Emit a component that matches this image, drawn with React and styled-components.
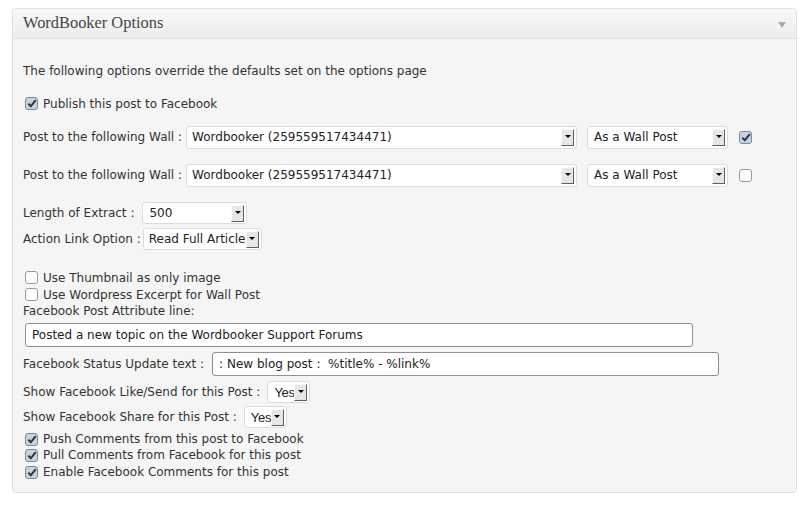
import React from 'react';
import styled, { createGlobalStyle } from 'styled-components';

const Global = createGlobalStyle`
  html, body { margin: 0; padding: 0; background: #fff; }
  body {
    font-family: "DejaVu Sans", Verdana, sans-serif;
    font-size: 12px;
    color: #333;
  }
`;

const Panel = styled.div`
  margin: 8px 0 0 12px;
  width: 785px;
  box-sizing: border-box;
  border: 1px solid #dfdfdf;
  border-radius: 4px;
  background: #f5f5f5;
`;

const Header = styled.div`
  height: 29px;
  border-bottom: 1px solid #dfdfdf;
  background: linear-gradient(#f9f9f9, #ececec);
  border-radius: 3px 3px 0 0;
  display: flex;
  align-items: center;
  justify-content: space-between;
  padding: 0 10px;
`;

const Title = styled.h3`
  margin: 0 0 1px 0;
  font-family: "Liberation Serif", "Times New Roman", serif;
  font-weight: normal;
  font-size: 16.4px;
  color: #464646;
`;

const Toggle = styled.span`
  width: 0;
  height: 0;
  border-left: 4px solid transparent;
  border-right: 4px solid transparent;
  border-top: 6px solid #aaa;
  margin-top: 2px;
`;

const Body = styled.div`
  padding: 24px 10px 12px 10px;
  display: flex;
  flex-direction: column;
`;

const Line = styled.div`
  height: ${p => p.$h || 17}px;
  line-height: ${p => p.$h || 17}px;
  margin-top: ${p => p.$mt || 0}px;
  white-space: nowrap;
`;

const CheckLine = styled.label`
  display: flex;
  align-items: center;
  height: ${p => p.$h || 17}px;
  margin-top: ${p => p.$mt || 0}px;
  padding-left: 2px;
  gap: 5px;
  white-space: nowrap;
`;

const Box = styled.span`
  width: 13px;
  height: 13px;
  flex: none;
  box-sizing: border-box;
  border: 1px solid ${p => (p.$checked ? '#7d8999' : '#9a9a9a')};
  border-radius: 3px;
  background: ${p => (p.$checked ? '#c8d2df' : '#fff')};
  display: inline-flex;
  align-items: center;
  justify-content: center;
  margin-left: ${p => p.$ml || 0}px;
`;

const Row = styled.div`
  display: flex;
  align-items: center;
  height: 24px;
  margin-top: ${p => p.$mt || 0}px;
  white-space: nowrap;
`;

const Select = styled.div`
  width: ${p => p.$w}px;
  height: ${p => p.$h || 22}px;
  box-sizing: border-box;
  background: #fff;
  border: 1px solid #dcdcdc;
  border-radius: 3px;
  display: flex;
  align-items: center;
  padding: 0 2px 0 ${p => p.$pl ?? 6}px;
  margin-left: ${p => p.$ml ?? 5}px;
  flex: none;
`;

const SelectText = styled.span`
  flex: 1;
  color: #222;
  white-space: nowrap;
  overflow: hidden;
  font-family: ${p => (p.$alt ? '"Liberation Sans", Arial, sans-serif' : 'inherit')};
  font-size: ${p => (p.$alt ? '13px' : '12px')};
  letter-spacing: ${p => (p.$alt ? '-0.3px' : '0')};
`;

const Arrow = styled.span`
  width: 13px;
  height: 17px;
  flex: none;
  box-sizing: border-box;
  background: #e6e6e6;
  border-top: 1px solid #fbfbfb;
  border-left: 1px solid #fbfbfb;
  border-right: 1px solid #5e5e5e;
  border-bottom: 1px solid #5e5e5e;
  display: flex;
  align-items: center;
  justify-content: center;
  &::after {
    content: '';
    border-left: 3px solid transparent;
    border-right: 3px solid transparent;
    border-top: 3px solid #000;
    margin-bottom: 1px;
  }
`;

const TextInput = styled.div`
  width: ${p => p.$w}px;
  height: 24px;
  box-sizing: border-box;
  background: #fff;
  border: 1px solid #8f8f8f;
  border-radius: 3px;
  display: flex;
  align-items: center;
  padding-left: 6px;
  margin-left: ${p => p.$ml ?? 0}px;
  margin-top: ${p => p.$mt || 0}px;
  color: #222;
  white-space: pre;
  flex: none;
`;

const Check = ({ checked, ml }) => (
  <Box $checked={checked} $ml={ml}>
    {checked && (
      <svg width="10" height="9" viewBox="0 0 10 9">
        <path d="M1.3 4.6 L3.8 7.2 L8.8 1.2" fill="none" stroke="#2b384a" strokeWidth="2" />
      </svg>
    )}
  </Box>
);

const DropDown = ({ w, h, text, alt, ml, pl }) => (
  <Select $w={w} $h={h} $ml={ml} $pl={pl}>
    <SelectText $alt={alt}>{text}</SelectText>
    <Arrow />
  </Select>
);

export default function App() {
  return (
    <>
      <Global />
      <Panel>
        <Header>
          <Title>WordBooker Options</Title>
          <Toggle />
        </Header>
        <Body>
          <Line>The following options override the defaults set on the options page</Line>
          <CheckLine $mt={15}>
            <Check checked />
            Publish this post to Facebook
          </CheckLine>
          <Row $mt={13}>
            Post to the following Wall :
            <DropDown w={391} h={23} text="Wordbooker (259559517434471)" ml={4} pl={5} />
            <DropDown w={141} h={23} text="As a Wall Post" ml={10} />
            <Check checked ml={11} />
          </Row>
          <Row $mt={14}>
            Post to the following Wall :
            <DropDown w={391} h={23} text="Wordbooker (259559517434471)" ml={4} pl={5} />
            <DropDown w={141} h={23} text="As a Wall Post" ml={10} />
            <Check ml={11} />
          </Row>
          <Row $mt={14}>
            Length of Extract :
            <DropDown w={105} text="500" ml={8} />
          </Row>
          <Row $mt={2}>
            Action Link Option :
            <DropDown w={119} text="Read Full Article" pl={5} ml={2} />
          </Row>
          <CheckLine $mt={18}>
            <Check />
            Use Thumbnail as only image
          </CheckLine>
          <CheckLine>
            <Check />
            Use Wordpress Excerpt for Wall Post
          </CheckLine>
          <Line>Facebook Post Attribute line:</Line>
          <TextInput $w={668} $mt={3} $ml={2}>Posted a new topic on the Wordbooker Support Forums</TextInput>
          <Row $mt={5}>
            Facebook Status Update text :
            <TextInput $w={507} $ml={8}>: New blog post :  %title% - %link%</TextInput>
          </Row>
          <Row $mt={4}>
            Show Facebook Like/Send for this Post :
            <DropDown w={43} text="Yes" alt ml={7} />
          </Row>
          <Row $mt={1}>
            Show Facebook Share for this Post :
            <DropDown w={43} text="Yes" alt ml={7} />
          </Row>
          <CheckLine $mt={2} $h={16}>
            <Check checked />
            Push Comments from this post to Facebook
          </CheckLine>
          <CheckLine $h={16}>
            <Check checked />
            Pull Comments from Facebook for this post
          </CheckLine>
          <CheckLine $mt={1} $h={16}>
            <Check checked />
            Enable Facebook Comments for this post
          </CheckLine>
        </Body>
      </Panel>
    </>
  );
}
